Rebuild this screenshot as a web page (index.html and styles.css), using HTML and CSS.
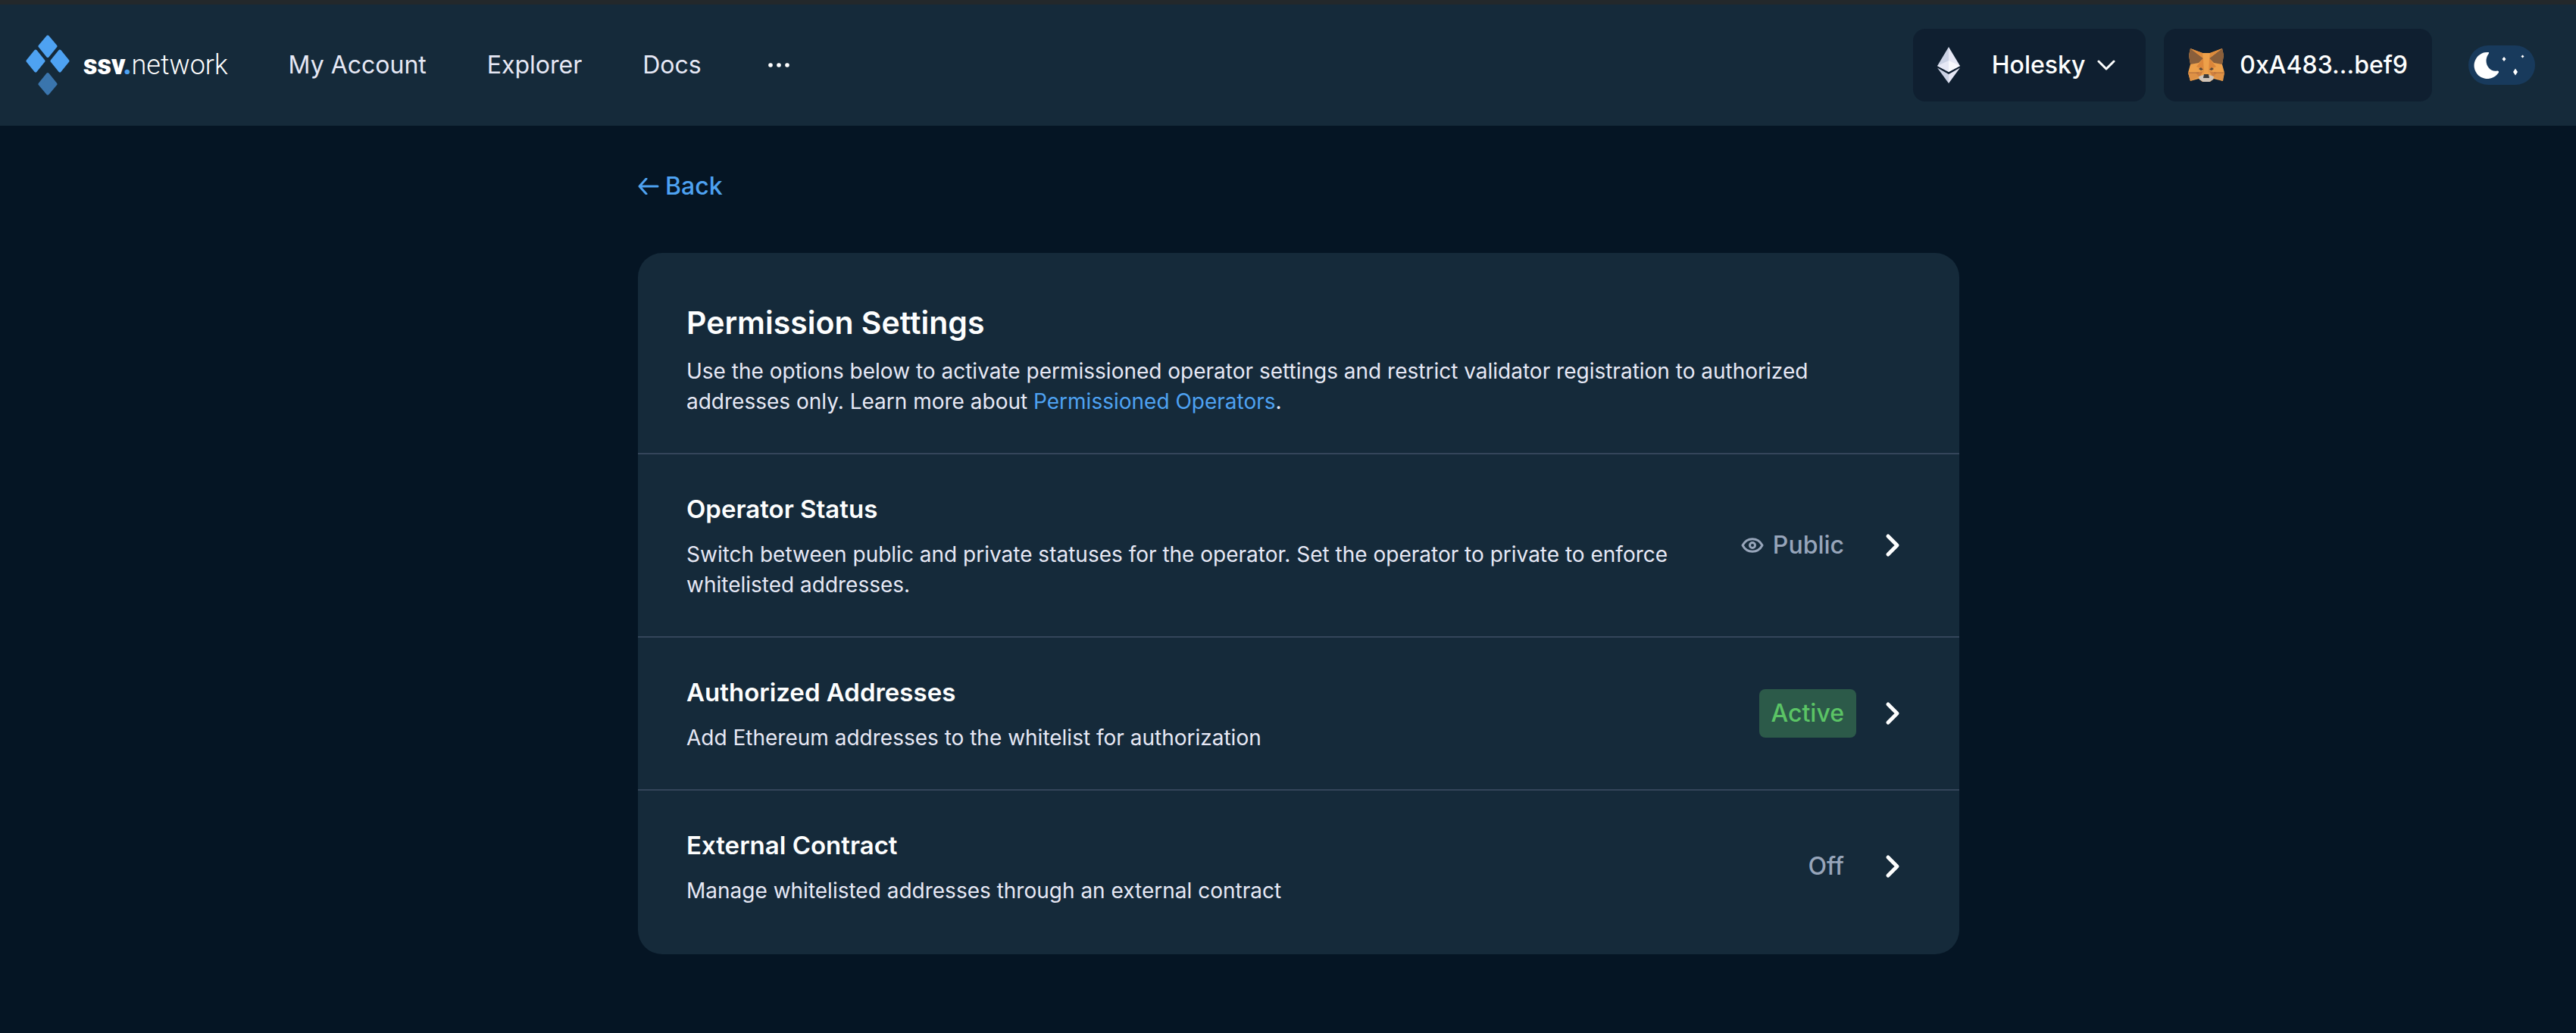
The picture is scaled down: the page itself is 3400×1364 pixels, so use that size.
FILE: index.html
```html
<!DOCTYPE html>
<html lang="en">
<head>
<meta charset="utf-8">
<meta name="viewport" content="width=device-width, initial-scale=1">
<title>Permission Settings</title>
<link rel="stylesheet" href="styles.css">
</head>
<body>
<header class="topbar">
  <a class="brand" href="#">
    <svg class="brand-mark" viewBox="0 0 58 80" width="58" height="80" aria-hidden="true">
      <g fill="#4ea2f2" stroke="#4ea2f2" stroke-width="4" stroke-linejoin="round">
        <path d="M29 2.500L39.500 15L29 28L18.500 15Z"/>
        <path d="M13 21.500L23.500 34.500L13 47.500L2.500 34.500Z"/>
        <path d="M45 21.500L55.500 34.500L45 47.500L34.500 34.500Z"/>
      </g>
      <path d="M29 52L39.500 65L29 77.500L18.500 65Z" fill="#3a75ad" stroke="#3a75ad" stroke-width="4" stroke-linejoin="round"/>
    </svg>
    <span class="wordmark"><b>ssv<i>.</i></b>network</span>
  </a>
  <nav class="nav">
    <a href="#">My Account</a>
    <a href="#">Explorer</a>
    <a href="#">Docs</a>
    <button class="more" type="button" aria-label="More">
      <svg viewBox="0 0 28 6" width="28" height="6" fill="#fff"><circle cx="3" cy="3" r="2.800"/><circle cx="14" cy="3" r="2.800"/><circle cx="25" cy="3" r="2.800"/></svg>
    </button>
  </nav>
  <div class="tools">
    <button class="pill network" type="button">
      <svg viewBox="0 0 30 48" width="30" height="48" aria-hidden="true">
        <path d="M15 0L0 25L15 33Z" fill="#cbd2e4"/><path d="M15 0L30 25L15 33Z" fill="#e6e8f5"/>
        <path d="M15 18L0 25L15 33Z" fill="#e6e8f5"/><path d="M15 18L30 25L15 33Z" fill="#f8f9fd"/>
        <path d="M0 27.500L15 36L15 48Z" fill="#cbd2e4"/><path d="M30 27.500L15 36L15 48Z" fill="#e6e8f5"/>
      </svg>
      <span class="network-name">Holesky
        <svg viewBox="0 0 24 14" width="24" height="14" fill="none" stroke="#fdfefe" stroke-width="3" stroke-linecap="round" stroke-linejoin="round" aria-hidden="true"><path d="M2 2L12 12L22 2"/></svg>
      </span>
    </button>
    <button class="pill wallet" type="button">
      <svg viewBox="0 0 48 44" width="48" height="44" aria-hidden="true">
        <path d="M3 0L19 6H29L45 0L47 9L45 21L48 32L46 43L34 40L29 44H19L14 40L3 43L0 32L3 21L1 9Z" fill="#eda04a"/>
        <path d="M3 0L20 13L14 19L3 21L1 9Z" fill="#8a5f3b"/><path d="M45 0L28 13L34 19L45 21L47 9Z" fill="#8a5f3b"/>
        <path d="M3 0L19 6L20 13Z" fill="#dd8b3c"/><path d="M45 0L29 6L28 13Z" fill="#dd8b3c"/>
        <path d="M20 13L11 24L20 28L21 34Z" fill="#dc863a"/><path d="M28 13L37 24L28 28L27 34Z" fill="#dc863a"/>
        <path d="M0 32H14L15 37L3 43Z" fill="#de9145"/><path d="M48 32H34L33 37L45 43Z" fill="#de9145"/>
        <path d="M10 32L20 30L15 38Z" fill="#cf8040"/><path d="M38 32L28 30L33 38Z" fill="#cf8040"/>
        <path d="M0 32H14M48 32H34" stroke="#a9683a" fill="none"/>
        <path d="M14 27L17 25L20 28L17 29Z" fill="#5c4a3c"/><path d="M34 27L31 25L28 28L31 29Z" fill="#5c4a3c"/>
        <path d="M14 37L20 35H28L34 37L33 41L28 44H20L15 41Z" fill="#d0c4b8"/><path d="M21 34H27L28 39H20Z" fill="#3b3b3b"/>
      </svg>
      <span>0xA483...bef9</span>
    </button>
    <button class="theme" type="button" aria-label="Toggle dark mode">
      <svg viewBox="0 0 88 52" width="88" height="52" fill="#fff" aria-hidden="true">
        <path d="M26 9C28 9 27 11 26 12C19 23 28 36 38 33.500C40 33.500 41 35 39 37A17.500 17.500 0 1 1 26 9Z"/>
        <path d="M62 30.500L65 35L62 39.500L59 35ZM47 15L49.500 18L47 21L44.500 18ZM71.500 12.500L73.500 14.500L71.500 16.500L69.500 14.500Z"/>
      </svg>
    </button>
  </div>
</header>

<main class="page">
  <a class="back" href="#">
    <svg viewBox="0 0 28 22" width="28" height="22" fill="none" stroke="currentColor" stroke-width="3" stroke-linecap="round" stroke-linejoin="round" aria-hidden="true"><path d="M26 11H2M11 1L2 11L11 21"/></svg>
    Back
  </a>
  <section class="card">
    <div class="intro">
      <h1>Permission Settings</h1>
      <p>Use the options below to activate permissioned operator settings and restrict validator registration to authorized addresses only. Learn more about <a href="#">Permissioned Operators</a>.</p>
    </div>
    <a class="row" href="#">
      <div class="row-text">
        <h2>Operator Status</h2>
        <p>Switch between public and private statuses for the operator. Set the operator to private to enforce whitelisted addresses.</p>
      </div>
      <span class="status">
        <svg viewBox="0 0 30 22" width="30" height="22" fill="none" stroke="currentColor" stroke-width="3" stroke-linejoin="round" aria-hidden="true"><path d="M2 11C8 0 22 0 28 11C22 22 8 22 2 11Z"/><circle cx="15" cy="11" r="3.500"/></svg>
        Public
      </span>
      <svg class="chevron" viewBox="0 0 32 32" width="32" height="32" aria-hidden="true"><path d="M10 4L22 16L10 28"/></svg>
    </a>
    <a class="row" href="#">
      <div class="row-text">
        <h2>Authorized Addresses</h2>
        <p>Add Ethereum addresses to the whitelist for authorization</p>
      </div>
      <span class="status active">Active</span>
      <svg class="chevron" viewBox="0 0 32 32" width="32" height="32" aria-hidden="true"><path d="M10 4L22 16L10 28"/></svg>
    </a>
    <a class="row" href="#">
      <div class="row-text">
        <h2>External Contract</h2>
        <p>Manage whitelisted addresses through an external contract</p>
      </div>
      <span class="status">Off</span>
      <svg class="chevron" viewBox="0 0 32 32" width="32" height="32" aria-hidden="true"><path d="M10 4L22 16L10 28"/></svg>
    </a>
  </section>
</main>
</body>
</html>
```
FILE: styles.css
```css
* { box-sizing: border-box; margin: 0; }
body { background: #051524; color: #fdfefe; font: 400 32px/48px Inter, sans-serif; }
a { color: inherit; text-decoration: none; }
button { font: inherit; color: inherit; border: 0; padding: 0; background: none; cursor: pointer; }
svg { display: block; flex: none; }

.topbar { display: flex; align-items: center; min-height: 166px; padding: 0 54px 0 34px; border-top: 6px solid #23282b; background: #152a3a; }
.brand { display: flex; align-items: center; gap: 18px; }
.wordmark { font-family: Roboto, sans-serif; font-weight: 300; font-size: 36px; color: #fff; }
.wordmark b { font-weight: 900; }
.wordmark i { font-style: normal; color: #4ea2f2; }
.nav { display: flex; align-items: center; gap: 80px; margin-left: 80px; color: #e6e8f5; }
.more { padding: 12px 8px; }

.tools { display: flex; align-items: center; margin-left: auto; font-weight: 500; }
.pill { display: flex; align-items: center; height: 96px; padding: 0 32px; border-radius: 16px; background: #0f1f30; }
.network { gap: 42px; padding-right: 40px; margin-right: 24px; }
.network-name { display: flex; align-items: center; gap: 16px; }
.wallet { gap: 20px; margin-right: 48px; }
.theme { border-radius: 26px; background: #183a5c; }

.page { width: 1772px; max-width: 100%; margin: 0 auto; padding: 56px 0 104px 28px; }
.back { display: inline-flex; align-items: center; gap: 8px; color: #4ea2f2; font-weight: 500; }
.card { margin-top: 64px; padding-bottom: 16px; border-radius: 32px; background: #152a3a; }
.card p { color: #e6e8f5; font-size: 28px; line-height: 40px; }
.intro { padding: 64px 64px 48px; }
h1 { margin-bottom: 16px; font-size: 41px; line-height: 56px; font-weight: 600; }
.intro a { color: #4ea2f2; }
.row { display: flex; align-items: center; padding: 48px 72px 48px 64px; border-top: 2px solid #34455a; }
.row-text { flex: 1; }
h2 { margin-bottom: 16px; font-size: 33px; line-height: 48px; font-weight: 600; }
.status { display: flex; align-items: center; gap: 12px; height: 64px; margin: 0 32px; padding: 0 16px; border-radius: 8px; color: #97a5ba; font-weight: 500; }
.active { background: #2c5a49; color: #5bc465; }
.chevron { fill: none; stroke: #fdfefe; stroke-width: 5; stroke-linecap: round; stroke-linejoin: round; }
```
